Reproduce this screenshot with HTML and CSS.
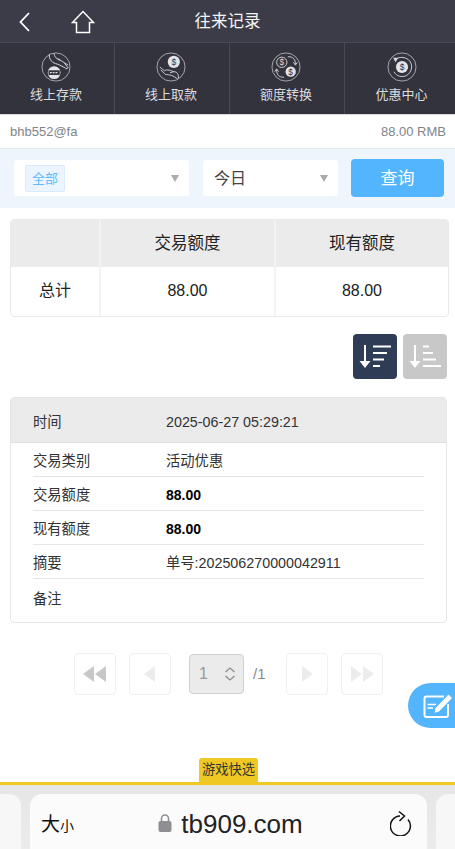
FILE: index.html
```html
<!DOCTYPE html>
<html lang="zh-CN">
<head>
  <meta charset="UTF-8">
  <meta name="viewport" content="width=device-width, initial-scale=1.0">
  <title>往来记录</title>
  <link rel="stylesheet" href="styles.css">
</head>
<body>

  <!-- 顶部标题 -->
  <div class="topbar">
    <div class="topbar-icons">
      <svg width="14" height="22" viewBox="0 0 14 22"><path d="M11 2 L2.500 11 L11 20" fill="none" stroke="#fff" stroke-width="1.800"/></svg>
      <svg width="24" height="24" viewBox="0 0 24 24"><path d="M1.500 12.500 L12 1.500 L22.500 12.500 H18.500 V22.500 H5.500 V12.500 Z" fill="none" stroke="#fff" stroke-width="1.500"/></svg>
    </div>
    <div class="topbar-title">往来记录</div>
  </div>

  <!-- 快捷导航 -->
  <div class="nav">
    <div class="nav-item">
      <svg width="30" height="30" viewBox="0 0 32 32">
        <circle cx="16" cy="16" r="15" fill="none" stroke="#b9b9bd" stroke-width=".9"/>
        <path d="M9 2 C8 8 12 12 18 13 L26 17 M14 1.500 C14 5 17 8 21 9 L29 14 M21 9 L18 7 M25 12 L29 17 L26 18" fill="none" stroke="#d6d6d8" stroke-width="1"/>
        <circle cx="14" cy="22" r="6.800" fill="#e4e4e6"/>
        <rect x="8" y="19.500" width="12" height="5" fill="#33333e"/>
        <path d="M9.500 22 H18.500" stroke="#e4e4e6" stroke-width="1.500" stroke-dasharray="2 1"/>
      </svg>
      <span>线上存款</span>
    </div>
    <div class="nav-item">
      <svg width="30" height="30" viewBox="0 0 32 32">
        <circle cx="16" cy="16" r="15" fill="none" stroke="#b9b9bd" stroke-width=".9"/>
        <circle cx="19" cy="10.500" r="6.500" fill="#e4e4e6"/>
        <text x="19" y="13.500" class="coin-mark">$</text>
        <path d="M4 16 L9 20 C12 18 16 20 19 21 L15 22 M5 19 L10 24 C14 24 19 25 23 29 M24 28 C24 24 23 21 19 21" fill="none" stroke="#d6d6d8" stroke-width="1"/>
      </svg>
      <span>线上取款</span>
    </div>
    <div class="nav-item">
      <svg width="30" height="30" viewBox="0 0 32 32">
        <circle cx="16" cy="16" r="15" fill="none" stroke="#b9b9bd" stroke-width=".9"/>
        <circle cx="11.500" cy="11" r="5.500" fill="none" stroke="#d6d6d8" stroke-width="1"/>
        <text x="11.500" y="14" class="coin-line">$</text>
        <circle cx="21" cy="21" r="5.500" fill="#e4e4e6"/>
        <text x="21" y="24" class="coin-mark">$</text>
        <path d="M18 5 C24 5 26 8 26 13 M24 11 L26 14 L28 11 M14 27 C8 27 6 24 6 19 M4 21 L6 18 L8 21" fill="none" stroke="#d6d6d8" stroke-width="1"/>
      </svg>
      <span>额度转换</span>
    </div>
    <div class="nav-item">
      <svg width="30" height="30" viewBox="0 0 32 32">
        <circle cx="16" cy="16" r="15" fill="none" stroke="#b9b9bd" stroke-width=".9"/>
        <circle cx="16" cy="16" r="6.500" fill="#e4e4e6"/>
        <text x="16" y="19.500" class="coin-mark">$</text>
        <path d="M9 8 C13 4.500 21 5 24.500 10 C28 15 26 22 21 25 C16 27.500 10 26 7.500 21" fill="none" stroke="#d6d6d8" stroke-width="1"/>
        <path d="M6.500 6 L12 6 L9 11 Z" fill="#d6d6d8"/>
      </svg>
      <span>优惠中心</span>
    </div>
  </div>

  <!-- 账户 -->
  <div class="account">
    <span>bhb552@fa</span>
    <span>88.00 RMB</span>
  </div>

  <!-- 查询 -->
  <div class="filter">
    <div class="select select-type">
      <span class="tag">全部</span>
      <i class="caret"></i>
    </div>
    <div class="select select-date">
      <span class="select-text">今日</span>
      <i class="caret"></i>
    </div>
    <button class="query-btn">查询</button>
  </div>

  <!-- 总计 -->
  <div class="summary">
    <div class="summary-row summary-head">
      <div class="cell"></div>
      <div class="cell">交易额度</div>
      <div class="cell">现有额度</div>
    </div>
    <div class="summary-row summary-total">
      <div class="cell">总计</div>
      <div class="cell">88.00</div>
      <div class="cell">88.00</div>
    </div>
  </div>

  <!-- 排序 -->
  <div class="sort">
    <div class="sort-btn active">
      <svg width="32" height="28" viewBox="0 0 32 28">
        <path d="M6 2 V20" stroke="#fff" stroke-width="2" fill="none"/>
        <path d="M0.500 18 H11.500 L6 25 Z" fill="#fff"/>
        <path d="M14 3.500 H32 M14 10 H28 M14 16.500 H25 M14 23 H21" stroke="#fff" stroke-width="2" fill="none"/>
      </svg>
    </div>
    <div class="sort-btn">
      <svg width="32" height="28" viewBox="0 0 32 28">
        <path d="M6 2 V20" stroke="#fff" stroke-width="2" fill="none"/>
        <path d="M0.500 18 H11.500 L6 25 Z" fill="#fff"/>
        <path d="M14 3.500 H20 M14 10 H24 M14 16.500 H27 M14 23 H32" stroke="#fff" stroke-width="2" fill="none"/>
      </svg>
    </div>
  </div>

  <!-- 明细 -->
  <div class="detail">
    <div class="detail-head">
      <span class="detail-label">时间</span>
      <span>2025-06-27 05:29:21</span>
    </div>
    <div class="detail-body">
      <div class="detail-row"><span class="detail-label">交易类别</span><span>活动优惠</span></div>
      <div class="detail-row"><span class="detail-label">交易额度</span><b>88.00</b></div>
      <div class="detail-row"><span class="detail-label">现有额度</span><b>88.00</b></div>
      <div class="detail-row"><span class="detail-label">摘要</span><span>单号:202506270000042911</span></div>
      <div class="detail-row"><span class="detail-label">备注</span><span></span></div>
    </div>
  </div>

  <!-- 分页 -->
  <div class="pager">
    <div class="page-btn"><svg width="26" height="16" viewBox="0 0 26 16"><path d="M12 0 V16 L1 8 Z M24 0 V16 L13 8 Z" fill="#c8c8c8"/></svg></div>
    <div class="page-btn"><svg width="12" height="16" viewBox="0 0 12 16"><path d="M11 0 V16 L0 8 Z" fill="#ececec"/></svg></div>
    <div class="page-select">
      <span>1</span>
      <svg width="12" height="14" viewBox="0 0 12 14"><path d="M1.500 5 L6 1 L10.500 5 M1.500 9 L6 13 L10.500 9" fill="none" stroke="#8c8c8c" stroke-width="1.300"/></svg>
    </div>
    <span class="page-total">/1</span>
    <div class="page-btn"><svg width="12" height="16" viewBox="0 0 12 16"><path d="M1 0 V16 L12 8 Z" fill="#ececec"/></svg></div>
    <div class="page-btn"><svg width="26" height="16" viewBox="0 0 26 16"><path d="M2 0 V16 L13 8 Z M14 0 V16 L25 8 Z" fill="#ececec"/></svg></div>
  </div>

  <!-- 悬浮按钮 -->
  <div class="float-btn">
    <svg width="30" height="26" viewBox="0 0 30 26">
      <path d="M21 3.500 H3.500 Q1.500 3.500 1.500 5.500 V22 Q1.500 24 3.500 24 H23 Q25 24 25 22 V11" fill="none" stroke="#fff" stroke-width="2"/>
      <path d="M4.500 11.500 H13 M4.500 15 H10" stroke="#fff" stroke-width="1.600" fill="none"/>
      <path d="M25.500 1 L29.500 5 L16 19 L11 20.500 L12 15 Z" fill="#fff" stroke="#54b5ff" stroke-width="1"/>
    </svg>
  </div>

  <!-- 底部 -->
  <div class="footer">
    <div class="game-tab">游戏快选</div>
    <div class="browser">
      <div class="browser-side left"></div>
      <div class="browser-url">
        <div class="font-size">大<small>小</small></div>
        <div class="address">
          <svg width="14" height="20" viewBox="0 0 14 20"><path d="M3.500 9 V5.500 a3.500 3.500 0 0 1 7 0 V9" fill="none" stroke="#8e8e93" stroke-width="1.600"/><rect x="0.500" y="8" width="13" height="11" rx="2" fill="#8e8e93"/></svg>
          <span>tb909.com</span>
        </div>
        <svg width="24" height="26" viewBox="0 0 24 26"><path d="M18 9.500 A10 10 0 1 1 10 6 M9 1.500 L14.500 6 L9.500 11" fill="none" stroke="#111" stroke-width="1.500"/></svg>
      </div>
      <div class="browser-side right"></div>
    </div>
  </div>

</body>
</html>
```

FILE: styles.css
```css
/* 通用 */
html, body {
  height: 100%;
}

body {
  margin: 0;
  font-family: "Liberation Sans", "Noto Sans CJK SC", sans-serif;
  font-size: 14px;
  color: #222;
  background-color: #fff;
  display: flex;
  flex-direction: column;
  position: relative;
  overflow: hidden;
}

/* 顶部标题 */
.topbar {
  height: 42px;
  flex: none;
  background-color: #3c3c48;
  border-bottom: 1px solid #4a4a55;
  display: flex;
  align-items: center;
  justify-content: center;
  position: relative;
}

.topbar-icons {
  position: absolute;
  left: 18px;
  top: 10px;
  display: flex;
  align-items: center;
  gap: 39px;
}

.topbar-title {
  color: #f4f4f4;
  font-size: 16.500px;
  line-height: 20px;
}

/* 快捷导航 */
.nav {
  height: 71px;
  flex: none;
  background-color: #33333e;
  display: grid;
  grid-template-columns: 114px 115px 115px 1fr;
}

.nav-item {
  display: flex;
  flex-direction: column;
  align-items: center;
  padding: 9px 2px 0 0;
  color: #dcdcde;
  font-size: 13px;
  line-height: 18px;
  border-left: 1px solid #484852;
}

.nav-item:first-child {
  border-left: none;
}

.nav-item:last-child {
  padding: 9px 0 0 3px;
}

.nav-item span {
  margin-top: 4px;
}

.coin-mark, .coin-line {
  font-size: 9px;
  text-anchor: middle;
  fill: #33333e;
}

.coin-line {
  fill: #d6d6d8;
}

/* 账户 */
.account {
  height: 33px;
  flex: none;
  border-top: 1px solid #d8d8dc;
  display: flex;
  align-items: center;
  justify-content: space-between;
  padding: 0 9px 0 10px;
  color: #7f8489;
  font-size: 13px;
}

/* 查询 */
.filter {
  height: 60px;
  flex: none;
  background-color: #eef5fd;
  border-top: 1px solid #e4ebf4;
  box-sizing: border-box;
  display: flex;
  align-items: center;
  padding: 0 11px 1px 14px;
}

.select {
  height: 36px;
  box-sizing: border-box;
  background-color: #fff;
  border-radius: 3px;
  display: flex;
  align-items: center;
  justify-content: space-between;
  padding: 0 10px 0 11px;
}

.select-type {
  width: 175px;
  margin-right: 14px;
}

.select-date {
  width: 135px;
  margin-right: 13px;
  font-size: 16px;
  color: #444;
}

.select-text {
  line-height: 20px;
  padding-top: 2px;
}

.tag {
  font-size: 13px;
  color: #61b8ff;
  background-color: #ecf5ff;
  border: 1px solid #d9ecff;
  border-radius: 2px;
  padding: 3px 6px;
  line-height: 19px;
}

.caret {
  width: 0;
  height: 0;
  border-left: 4.500px solid transparent;
  border-right: 4.500px solid transparent;
  border-top: 7px solid #aaa;
}

.query-btn {
  width: 93px;
  height: 38px;
  border: none;
  border-radius: 4px;
  background-color: #54b5ff;
  color: #fff;
  font-family: inherit;
  font-size: 17px;
  line-height: 20px;
  padding: 2px 0 0;
}

/* 总计 */
.summary {
  margin: 11px 6px 0 10px;
  border: 1px solid #eaeaea;
  border-radius: 4px;
  overflow: hidden;
  flex: none;
}

.summary-row {
  display: grid;
  grid-template-columns: 88px 175px 1fr;
  height: 49px;
  font-size: 16px;
}

.summary-head {
  height: 47px;
  background-color: #ebebeb;
  font-size: 16.500px;
}

.summary .cell {
  display: flex;
  align-items: center;
  justify-content: center;
  border-left: 2px solid #f3f3f3;
  color: #222;
  line-height: 20px;
  padding-bottom: 1px;
}

.summary-total .cell {
  padding-bottom: 2px;
}

.summary .cell:first-child {
  border-left: none;
}

/* 排序 */
.sort {
  display: flex;
  justify-content: flex-end;
  gap: 6px;
  margin: 17px 8px 18px 0;
  flex: none;
}

.sort-btn {
  width: 44px;
  height: 45px;
  border-radius: 4px;
  background-color: #c8c8c8;
  display: flex;
  align-items: center;
  justify-content: center;
}

.sort-btn.active {
  background-color: #2e3d55;
}

/* 明细 */
.detail {
  margin: 0 8px 0 10px;
  border: 1px solid #e6e6e6;
  border-radius: 4px;
  overflow: hidden;
  font-size: 14.300px;
  line-height: 18px;
  color: #333;
  flex: none;
}

.detail-head {
  height: 41px;
  padding: 3px 0 0 22px;
  background-color: #ebebeb;
  border-bottom: 1px solid #e0e0e0;
  display: flex;
  align-items: center;
}

.detail-body {
  padding: 0 22px 7px;
}

.detail-row {
  height: 30px;
  padding-top: 3px;
  border-bottom: 1px solid #e5e5e5;
  display: flex;
  align-items: center;
}

.detail-row:last-child {
  border-bottom: none;
  height: 33px;
}

.detail-row b {
  color: #000;
  font-size: 14px;
}

.detail-label {
  width: 133px;
  flex: none;
}

/* 分页 */
.pager {
  display: flex;
  align-items: center;
  margin: 30px 0 0 74px;
  height: 41px;
  flex: none;
}

.page-btn {
  width: 40px;
  height: 40px;
  border: 1px solid #f0f0f0;
  border-radius: 4px;
  display: flex;
  align-items: center;
  justify-content: center;
  margin-right: 13px;
}

.page-select {
  height: 40px;
  margin-left: 5px;
  background-color: #ebebeb;
  border: 1px solid #d0d0d0;
  border-radius: 4px;
  display: flex;
  align-items: center;
  justify-content: space-between;
  padding: 0 7px 0 9px;
  box-sizing: border-box;
  width: 55px;
  color: #999;
  font-size: 16px;
}

.page-total {
  margin: 0 20px 0 9px;
  color: #888;
  font-size: 15px;
}

/* 悬浮按钮 */
.float-btn {
  position: absolute;
  right: 0;
  top: 683px;
  width: 47px;
  height: 45px;
  background-color: #54b5ff;
  border-radius: 23px 0 0 23px;
  display: flex;
  align-items: center;
  justify-content: flex-end;
  padding-right: 2px;
  box-sizing: border-box;
}

/* 底部 */
.footer {
  margin-top: auto;
  flex: none;
}

.game-tab {
  width: 59px;
  height: 24px;
  margin-left: 199px;
  background-color: #f0c824;
  border-radius: 3px 3px 0 0;
  color: #333;
  font-size: 13.300px;
  text-align: center;
  line-height: 24px;
}

.browser {
  border-top: 3px solid #f0c824;
  height: 64px;
  background: linear-gradient(#e6e6e6, #ececec);
  display: flex;
  align-items: flex-end;
  gap: 9px;
}

.browser-side {
  height: 55px;
  flex: 1;
  background-color: #f7f7f7;
}

.browser-side.left {
  flex: none;
  width: 21px;
  border-radius: 0 12px 0 0;
}

.browser-side.right {
  border-radius: 12px 0 0 0;
}

.browser-url {
  width: 397px;
  flex: none;
  height: 55px;
  box-sizing: border-box;
  background-color: #fbfbfb;
  border-radius: 12px 12px 0 0;
  display: flex;
  align-items: center;
  justify-content: space-between;
  padding: 2px 13px 0 11px;
}

.font-size {
  font-size: 19px;
  color: #111;
}

.font-size small {
  font-size: 14px;
}

.address {
  display: flex;
  align-items: center;
  gap: 9px;
  margin-right: 3px;
  font-size: 26px;
  color: #222;
}

.address span {
  padding-top: 3px;
}
```
